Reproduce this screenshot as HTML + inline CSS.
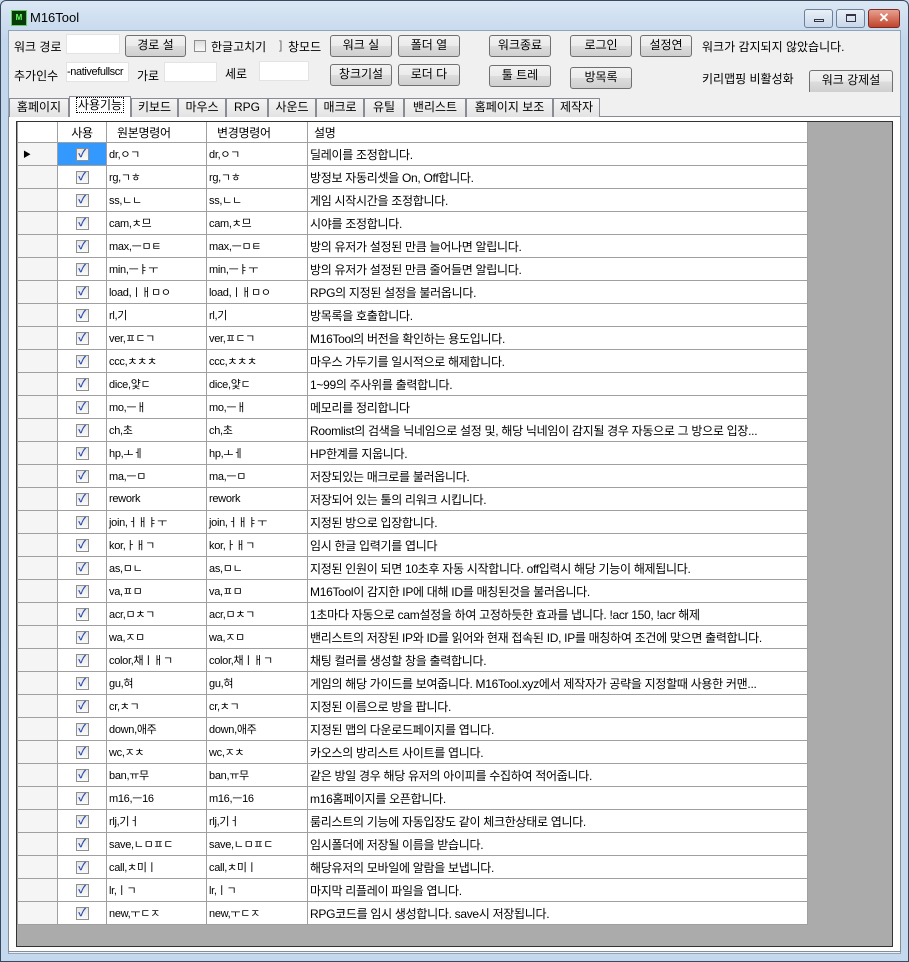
<!DOCTYPE html><html><head><meta charset="utf-8"><style>
*{margin:0;padding:0;box-sizing:border-box}
body{width:909px;height:962px;overflow:hidden;background:#c9dcef;font-family:"Liberation Sans","Noto Sans CJK KR","NanumGothic",sans-serif;font-size:12px;color:#000;position:relative}
.frame{position:absolute;left:0;top:0;width:909px;height:962px;border:1px solid #3a4a5c;border-radius:6px 6px 0 0;background:linear-gradient(#dbe7f4,#c2d6ec 40px,#c4d8ee)}
.client{position:absolute;left:8px;top:30px;width:893px;height:924px;background:#f0f0f0;border:1px solid #8ea3bc}
.a{position:absolute;white-space:nowrap}
.btn{position:absolute;height:22px;border:1px solid #707070;border-radius:3px;background:linear-gradient(#f2f2f2,#ebebeb 50%,#dddddd 50%,#cfcfcf);text-align:center;line-height:19px;font-size:12px}
.tb{position:absolute;background:#fff;border:1px solid #e3e3e3;height:20px}
.tab{position:absolute;top:98px;height:19px;border:1px solid #898c95;border-bottom:none;background:linear-gradient(#f5f5f5,#e3e3e3);text-align:center;line-height:17px;font-size:12px}
.panel{position:absolute;left:8px;top:116px;width:893px;height:836px;border:1px solid #898c95;background:#fff}
.grid{position:absolute;left:16px;top:121px;width:877px;height:826px;background:#ababab;border:1px solid #333}
table{position:absolute;left:0;top:0;border-collapse:collapse;table-layout:fixed;font-size:11px}
td{box-sizing:content-box;height:22px;border:1px solid #a0a0a0;background:#fff;padding:0 0 0 2px;overflow:hidden;white-space:nowrap;letter-spacing:-0.3px}
td.h{background:#f5f5f5;border-color:#a0a0a0}
tr.hd td{height:20px;background:#fff;font-size:12px;border-bottom:1px solid #a0a0a0;border-top:none}
td.c{text-align:center;padding:0}
td.d{font-size:12px}
.cb{display:inline-block;width:13px;height:13px;border:1px solid #8f8f8f;background:linear-gradient(#e6e6e6,#fafafa);color:#2a4fb0;font-size:11px;line-height:11px;text-align:center;vertical-align:middle;font-weight:bold}
.wb{position:absolute;top:9px;height:19px;border:1px solid #6d7f99;border-radius:3px;background:linear-gradient(#e9f0f8,#c8d7e9)}
</style></head><body>
<div class="frame"></div>
<div class="a" style="left:11px;top:10px;width:16px;height:16px;background:#0a3a0a;border:1px solid #6c6;color:#6f6;font-size:8px;line-height:14px;text-align:center;font-weight:bold">M</div>
<div class="a" style="left:30px;top:10px;font-size:13px">M16Tool</div>
<div class="wb" style="left:804px;width:29px"><div style="position:absolute;left:9px;top:9px;width:10px;height:3px;border:1px solid #334"></div></div>
<div class="wb" style="left:836px;width:29px"><div style="position:absolute;left:9px;top:4px;width:10px;height:8px;border:1px solid #334;border-top-width:2px"></div></div>
<div class="wb" style="left:868px;width:32px;background:linear-gradient(#e8a090,#c0442c);border-color:#7a2a20;color:#fff;text-align:center;font-weight:bold;line-height:16px;font-size:13px">✕</div>
<div class="client"></div>
<div class="a" style="left:14px;top:38px">워크 경로</div>
<div class="tb" style="left:66px;top:34px;width:54px"></div>
<div class="btn" style="left:125px;top:35px;width:61px">경로 설</div>
<div class="a" style="left:194px;top:40px;width:12px;height:12px;border:1px solid #8f8f8f;background:linear-gradient(#ddd,#fafafa)"></div>
<div class="a" style="left:211px;top:38px">한글고치기</div>
<div class="a" style="left:279px;top:38px;color:#666">]</div>
<div class="a" style="left:288px;top:38px">창모드</div>
<div class="btn" style="left:330px;top:35px;width:62px">워크 실</div>
<div class="btn" style="left:398px;top:35px;width:62px">폴더 열</div>
<div class="btn" style="left:489px;top:35px;width:62px">워크종료</div>
<div class="btn" style="left:570px;top:35px;width:62px">로그인</div>
<div class="btn" style="left:640px;top:35px;width:52px">설정연</div>
<div class="a" style="left:702px;top:38px">워크가 감지되지 않았습니다.</div>
<div class="a" style="left:14px;top:67px">추가인수</div>
<div class="tb" style="left:66px;top:62px;width:63px;font-size:11px;line-height:18px;overflow:hidden;letter-spacing:-0.4px">-nativefullscr</div>
<div class="a" style="left:137px;top:67px">가로</div>
<div class="tb" style="left:164px;top:62px;width:53px"></div>
<div class="a" style="left:225px;top:65px">세로</div>
<div class="tb" style="left:259px;top:61px;width:50px"></div>
<div class="btn" style="left:330px;top:64px;width:62px">창크기설</div>
<div class="btn" style="left:398px;top:64px;width:62px">로더 다</div>
<div class="btn" style="left:489px;top:65px;width:62px">툴 트레</div>
<div class="btn" style="left:570px;top:67px;width:62px">방목록</div>
<div class="a" style="left:702px;top:70px">키리맵핑 비활성화</div>
<div class="btn" style="left:809px;top:70px;width:84px;border-bottom:none;border-radius:3px 3px 0 0">워크 강제설</div>
<div class="panel"></div>
<div class="tab" style="left:9px;width:60px">홈페이지</div>
<div class="tab" style="left:69px;top:96px;height:21px;width:62px;background:#fff;z-index:2"><span style="outline:1px dotted #000;padding:0 1px">사용기능</span></div>
<div class="tab" style="left:131px;width:47px">키보드</div>
<div class="tab" style="left:178px;width:48px">마우스</div>
<div class="tab" style="left:226px;width:42px">RPG</div>
<div class="tab" style="left:268px;width:48px">사운드</div>
<div class="tab" style="left:316px;width:48px">매크로</div>
<div class="tab" style="left:364px;width:40px">유틸</div>
<div class="tab" style="left:404px;width:62px">밴리스트</div>
<div class="tab" style="left:466px;width:87px">홈페이지 보조</div>
<div class="tab" style="left:553px;width:47px">제작자</div>
<div class="grid"><table>
<colgroup><col style="width:40px"><col style="width:49px"><col style="width:100px"><col style="width:101px"><col style="width:500px"></colgroup>
<tr class="hd"><td class="h" style="background:#fff"></td><td class="c">사용</td><td style="padding-left:10px">원본명령어</td><td style="padding-left:10px">변경명령어</td><td style="padding-left:6px">설명</td></tr>
<tr><td class="h" style="font-size:8px;padding-left:5px">▶</td><td class="c" style="background:#3399ff"><span class="cb">✓</span></td><td>dr,ㅇㄱ</td><td>dr,ㅇㄱ</td><td class="d">딜레이를 조정합니다.</td></tr>
<tr><td class="h"></td><td class="c"><span class="cb">✓</span></td><td>rg,ㄱㅎ</td><td>rg,ㄱㅎ</td><td class="d">방정보 자동리셋을 On, Off합니다.</td></tr>
<tr><td class="h"></td><td class="c"><span class="cb">✓</span></td><td>ss,ㄴㄴ</td><td>ss,ㄴㄴ</td><td class="d">게임 시작시간을 조정합니다.</td></tr>
<tr><td class="h"></td><td class="c"><span class="cb">✓</span></td><td>cam,ㅊ므</td><td>cam,ㅊ므</td><td class="d">시야를 조정합니다.</td></tr>
<tr><td class="h"></td><td class="c"><span class="cb">✓</span></td><td>max,ㅡㅁㅌ</td><td>max,ㅡㅁㅌ</td><td class="d">방의 유저가 설정된 만큼 늘어나면 알립니다.</td></tr>
<tr><td class="h"></td><td class="c"><span class="cb">✓</span></td><td>min,ㅡㅑㅜ</td><td>min,ㅡㅑㅜ</td><td class="d">방의 유저가 설정된 만큼 줄어들면 알립니다.</td></tr>
<tr><td class="h"></td><td class="c"><span class="cb">✓</span></td><td>load,ㅣㅐㅁㅇ</td><td>load,ㅣㅐㅁㅇ</td><td class="d">RPG의 지정된 설정을 불러옵니다.</td></tr>
<tr><td class="h"></td><td class="c"><span class="cb">✓</span></td><td>rl,기</td><td>rl,기</td><td class="d">방목록을 호출합니다.</td></tr>
<tr><td class="h"></td><td class="c"><span class="cb">✓</span></td><td>ver,ㅍㄷㄱ</td><td>ver,ㅍㄷㄱ</td><td class="d">M16Tool의 버전을 확인하는 용도입니다.</td></tr>
<tr><td class="h"></td><td class="c"><span class="cb">✓</span></td><td>ccc,ㅊㅊㅊ</td><td>ccc,ㅊㅊㅊ</td><td class="d">마우스 가두기를 일시적으로 해제합니다.</td></tr>
<tr><td class="h"></td><td class="c"><span class="cb">✓</span></td><td>dice,얓ㄷ</td><td>dice,얓ㄷ</td><td class="d">1~99의 주사위를 출력합니다.</td></tr>
<tr><td class="h"></td><td class="c"><span class="cb">✓</span></td><td>mo,ㅡㅐ</td><td>mo,ㅡㅐ</td><td class="d">메모리를 정리합니다</td></tr>
<tr><td class="h"></td><td class="c"><span class="cb">✓</span></td><td>ch,초</td><td>ch,초</td><td class="d">Roomlist의 검색을 닉네임으로 설정 및, 해당 닉네임이 감지될 경우 자동으로 그 방으로 입장...</td></tr>
<tr><td class="h"></td><td class="c"><span class="cb">✓</span></td><td>hp,ㅗㅔ</td><td>hp,ㅗㅔ</td><td class="d">HP한계를 지웁니다.</td></tr>
<tr><td class="h"></td><td class="c"><span class="cb">✓</span></td><td>ma,ㅡㅁ</td><td>ma,ㅡㅁ</td><td class="d">저장되있는 매크로를 불러옵니다.</td></tr>
<tr><td class="h"></td><td class="c"><span class="cb">✓</span></td><td>rework</td><td>rework</td><td class="d">저장되어 있는 툴의 리워크 시킵니다.</td></tr>
<tr><td class="h"></td><td class="c"><span class="cb">✓</span></td><td>join,ㅓㅐㅑㅜ</td><td>join,ㅓㅐㅑㅜ</td><td class="d">지정된 방으로 입장합니다.</td></tr>
<tr><td class="h"></td><td class="c"><span class="cb">✓</span></td><td>kor,ㅏㅐㄱ</td><td>kor,ㅏㅐㄱ</td><td class="d">임시 한글 입력기를 엽니다</td></tr>
<tr><td class="h"></td><td class="c"><span class="cb">✓</span></td><td>as,ㅁㄴ</td><td>as,ㅁㄴ</td><td class="d">지정된 인원이 되면 10초후 자동 시작합니다. off입력시 해당 기능이 해제됩니다.</td></tr>
<tr><td class="h"></td><td class="c"><span class="cb">✓</span></td><td>va,ㅍㅁ</td><td>va,ㅍㅁ</td><td class="d">M16Tool이 감지한 IP에 대해 ID를 매칭된것을 불러옵니다.</td></tr>
<tr><td class="h"></td><td class="c"><span class="cb">✓</span></td><td>acr,ㅁㅊㄱ</td><td>acr,ㅁㅊㄱ</td><td class="d">1초마다 자동으로 cam설정을 하여 고정하듯한 효과를 냅니다. !acr 150, !acr 해제</td></tr>
<tr><td class="h"></td><td class="c"><span class="cb">✓</span></td><td>wa,ㅈㅁ</td><td>wa,ㅈㅁ</td><td class="d">밴리스트의 저장된 IP와 ID를 읽어와 현재 접속된 ID, IP를 매칭하여 조건에 맞으면 출력합니다.</td></tr>
<tr><td class="h"></td><td class="c"><span class="cb">✓</span></td><td>color,채ㅣㅐㄱ</td><td>color,채ㅣㅐㄱ</td><td class="d">채팅 컬러를 생성할 창을 출력합니다.</td></tr>
<tr><td class="h"></td><td class="c"><span class="cb">✓</span></td><td>gu,혀</td><td>gu,혀</td><td class="d">게임의 해당 가이드를 보여줍니다. M16Tool.xyz에서 제작자가 공략을 지정할때 사용한 커맨...</td></tr>
<tr><td class="h"></td><td class="c"><span class="cb">✓</span></td><td>cr,ㅊㄱ</td><td>cr,ㅊㄱ</td><td class="d">지정된 이름으로 방을 팝니다.</td></tr>
<tr><td class="h"></td><td class="c"><span class="cb">✓</span></td><td>down,애주</td><td>down,애주</td><td class="d">지정된 맵의 다운로드페이지를 엽니다.</td></tr>
<tr><td class="h"></td><td class="c"><span class="cb">✓</span></td><td>wc,ㅈㅊ</td><td>wc,ㅈㅊ</td><td class="d">카오스의 방리스트 사이트를 엽니다.</td></tr>
<tr><td class="h"></td><td class="c"><span class="cb">✓</span></td><td>ban,ㅠ무</td><td>ban,ㅠ무</td><td class="d">같은 방일 경우 해당 유저의 아이피를 수집하여 적어줍니다.</td></tr>
<tr><td class="h"></td><td class="c"><span class="cb">✓</span></td><td>m16,ㅡ16</td><td>m16,ㅡ16</td><td class="d">m16홈페이지를 오픈합니다.</td></tr>
<tr><td class="h"></td><td class="c"><span class="cb">✓</span></td><td>rlj,기ㅓ</td><td>rlj,기ㅓ</td><td class="d">룸리스트의 기능에 자동입장도 같이 체크한상태로 엽니다.</td></tr>
<tr><td class="h"></td><td class="c"><span class="cb">✓</span></td><td>save,ㄴㅁㅍㄷ</td><td>save,ㄴㅁㅍㄷ</td><td class="d">임시폴더에 저장될 이름을 받습니다.</td></tr>
<tr><td class="h"></td><td class="c"><span class="cb">✓</span></td><td>call,ㅊ미ㅣ</td><td>call,ㅊ미ㅣ</td><td class="d">해당유저의 모바일에 알람을 보냅니다.</td></tr>
<tr><td class="h"></td><td class="c"><span class="cb">✓</span></td><td>lr,ㅣㄱ</td><td>lr,ㅣㄱ</td><td class="d">마지막 리플레이 파일을 엽니다.</td></tr>
<tr><td class="h"></td><td class="c"><span class="cb">✓</span></td><td>new,ㅜㄷㅈ</td><td>new,ㅜㄷㅈ</td><td class="d">RPG코드를 임시 생성합니다. save시 저장됩니다.</td></tr>
</table></div>
</body></html>
